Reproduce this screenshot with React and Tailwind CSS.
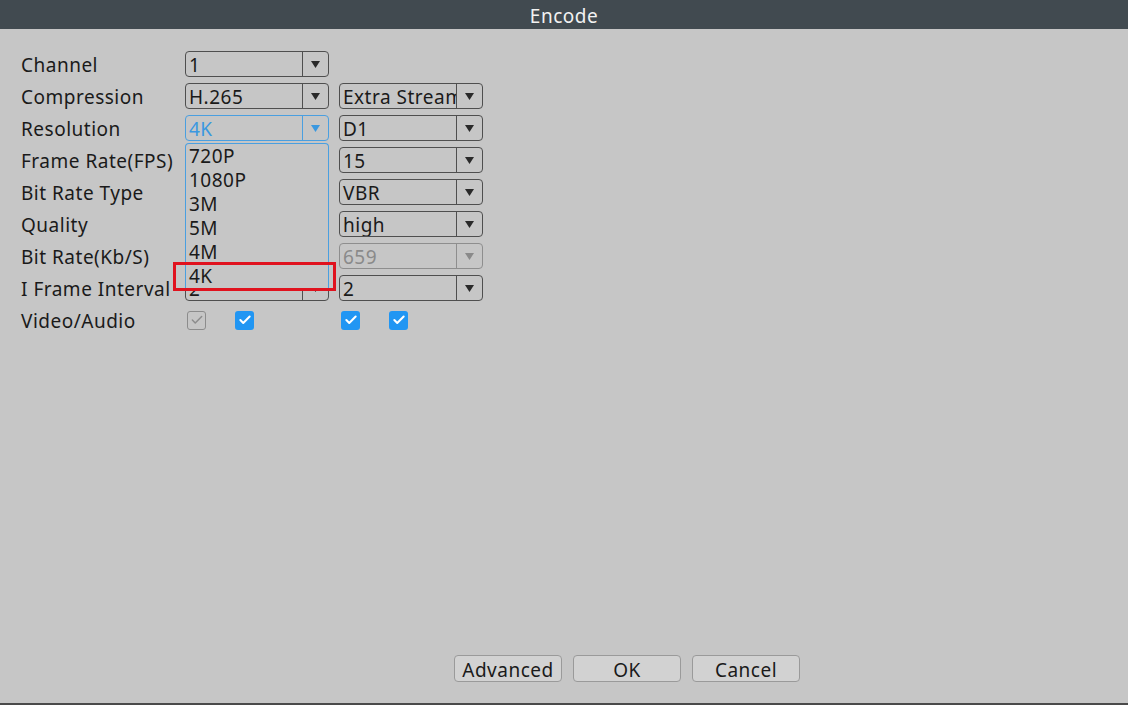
import { Check } from 'lucide-react';

const font = { fontFamily: '"Noto Sans", "Open Sans", sans-serif', letterSpacing: '0.5px' };

function Combo({ value, blue, disabled }) {
  const border = blue ? 'border-[#4a9fe0]' : disabled ? 'border-[#8e8e8e]' : 'border-[#4f4f4f]';
  const text = blue ? 'text-[#3a98e0]' : disabled ? 'text-[#8a8a8a]' : 'text-[#1a1a1a]';
  const arrow = blue ? 'text-[#3a98e0]' : disabled ? 'text-[#8a8a8a]' : 'text-[#2a2a2a]';
  return (
    <div className={`flex h-[26px] w-[144px] rounded-[4px] border ${border}`}>
      <div className={`flex-1 overflow-hidden whitespace-nowrap pl-[3px] pt-[2px] text-[19px] leading-[22px] ${text}`}>{value}</div>
      <div className={`flex w-[26px] items-center justify-center border-l ${border} ${arrow}`}>
        <svg width="9" height="7" viewBox="0 0 9 7"><path d="M0 0h9L4.5 7z" fill="currentColor" /></svg>
      </div>
    </div>
  );
}

function Box({ gray }) {
  if (gray) {
    return (
      <div className="flex h-[19px] w-[19px] items-center justify-center rounded-[3px] border border-[#8c8c8c] text-[#8c8c8c]">
        <Check size={14} strokeWidth={2.5} />
      </div>
    );
  }
  return (
    <div className="flex h-[19px] w-[19px] items-center justify-center rounded-[3px] bg-[#2196f3] text-white">
      <Check size={14} strokeWidth={3.5} />
    </div>
  );
}

const rows = [
  ['Channel', '1', null],
  ['Compression', 'H.265', 'Extra Stream'],
  ['Resolution', '4K', 'D1'],
  ['Frame Rate(FPS)', '', '15'],
  ['Bit Rate Type', '', 'VBR'],
  ['Quality', '', 'high'],
  ['Bit Rate(Kb/S)', '', '659'],
  ['I Frame Interval', '2', '2'],
];

const options = ['720P', '1080P', '3M', '5M', '4M', '4K'];

export default function App() {
  return (
    <div className="flex h-[705px] w-[1128px] flex-col bg-[#c6c6c6]" style={font}>
      <div className="flex h-[29px] items-center justify-center bg-[#414a50] pt-[3px] text-[19px] text-[#f2f2f2]">Encode</div>

      <div className="flex flex-1 flex-col pl-[21px] pt-[22px]">
        <div className="flex flex-col gap-[6px]">
          {rows.map(([label, a, b], i) => (
            <div key={label} className="flex h-[26px] items-center">
              <div className="h-[26px] w-[164px] pt-[2px] text-[19px] leading-[24px] text-[#1a1a1a]">{label}</div>
              <div className="relative">
                <Combo value={a} blue={i === 2} />
                {i === 2 && (
                  <div className="absolute left-0 top-[28px] z-10 h-[146px] w-[144px] rounded-t-[4px] border-x border-t border-[#4a9fe0] bg-[#c6c6c6]">
                    {options.map((o) => (
                      <div key={o} className="h-[24px] pl-[3px] pt-[1px] text-[19px] leading-[23px] text-[#1a1a1a]">{o}</div>
                    ))}
                  </div>
                )}
                {i === 2 && (
                  <div className="absolute left-[-12px] top-[147px] z-20 h-[29px] w-[163px] border-[3px] border-[#e0121e]" />
                )}
              </div>
              {b && (
                <div className="ml-[10px]">
                  <Combo value={b} disabled={i === 6} />
                </div>
              )}
            </div>
          ))}
          <div className="flex h-[26px] items-center">
            <div className="h-[26px] w-[164px] pt-[2px] text-[19px] leading-[24px] text-[#1a1a1a]">Video/Audio</div>
            <div className="flex w-[154px] gap-[29px] pl-[2px]">
              <Box gray />
              <Box />
            </div>
            <div className="flex gap-[29px] pl-[2px]">
              <Box />
              <Box />
            </div>
          </div>
        </div>

        <div className="mt-auto flex gap-[11px] pb-[21px] pl-[433px]">
          {['Advanced', 'OK', 'Cancel'].map((t) => (
            <button key={t} className="h-[27px] w-[108px] rounded-[4px] border border-[#9a9a9a] bg-[#d2d2d2] pt-[2px] text-[19px] leading-[22px] text-[#1a1a1a]" style={font}>
              {t}
            </button>
          ))}
        </div>
      </div>
      <div className="h-[2px] bg-[#4a4a4a]" />
    </div>
  );
}
